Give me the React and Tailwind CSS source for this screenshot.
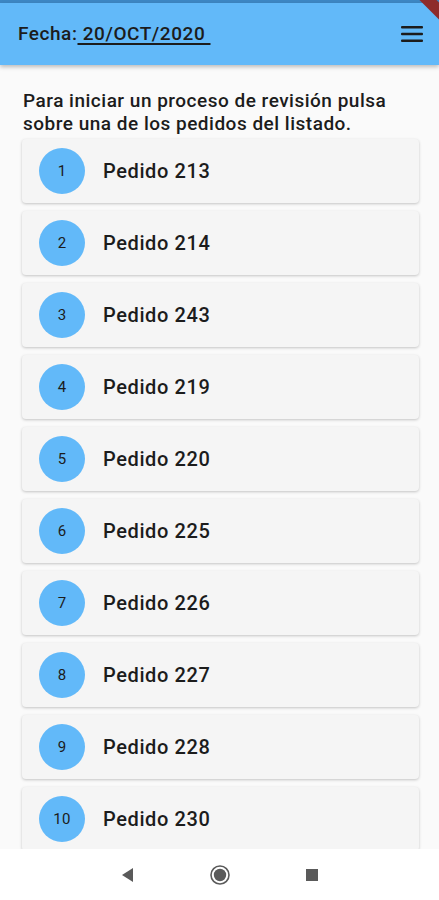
export default function App() {
  const pedidos = [213, 214, 243, 219, 220, 225, 226, 227, 228, 230];
  return (
    <div className="relative w-[439px] h-[900px] overflow-hidden bg-[#fafafa] flex flex-col" style={{ fontFamily: 'Roboto, "Liberation Sans", sans-serif' }}>
      <div className="h-[3px] bg-[#3d87c4] shrink-0" />
      <div className="h-[62px] shrink-0 bg-[#62b9f9] flex items-center justify-between pl-[18px] pr-[14px] shadow-[0_2px_4px_rgba(0,0,0,0.25)] z-10">
        <div className="text-[19px] font-medium text-[#1c1c1c] tracking-[0.55px]">
          Fecha:<span className="underline decoration-[1.5px] underline-offset-[3px] whitespace-pre"> 20/OCT/2020 </span>
        </div>
        <svg width="24" height="18" viewBox="0 0 24 18" className="mr-[1px]">
          <rect x="1" y="1" width="22" height="2.6" rx="1" fill="#1c1c1c" />
          <rect x="1" y="7.7" width="22" height="2.6" rx="1" fill="#1c1c1c" />
          <rect x="1" y="14.4" width="22" height="2.6" rx="1" fill="#1c1c1c" />
        </svg>
      </div>
      <div className="flex-1 flex flex-col px-[22px] pt-[24px]">
        <p className="text-[19px] font-medium leading-[23px] text-[#1c1c1c] pl-[1px] tracking-[0.5px]">
          Para iniciar un proceso de revisión pulsa sobre una de los pedidos del listado.
        </p>
        <div className="flex flex-col gap-[8px] mt-[4px] w-[397px]">
          {pedidos.map((p, i) => (
            <div key={p} className="h-[64px] shrink-0 bg-[#f5f5f5] rounded-[4px] shadow-[0_1px_3px_rgba(0,0,0,0.22)] flex items-center pl-[17px]">
              <div className="w-[46px] h-[46px] rounded-full bg-[#62b9f9] flex items-center justify-center text-[15px] text-[#1c1c1c] tracking-[0.3px]">
                {i + 1}
              </div>
              <span className="ml-[18px] text-[20px] font-medium text-[#1c1c1c] tracking-[0.6px]">Pedido {p}</span>
            </div>
          ))}
        </div>
      </div>
      <div className="absolute left-0 right-0 bottom-0 h-[51px] bg-white flex items-center justify-center">
        <div className="flex items-center gap-[70px]">
          <svg width="22" height="22" viewBox="0 0 22 22">
            <polygon points="16,4 16,18 5,11" fill="#5a5a5a" />
          </svg>
          <svg width="22" height="22" viewBox="0 0 22 22">
            <circle cx="11" cy="11" r="9" fill="none" stroke="#5a5a5a" strokeWidth="1.6" />
            <circle cx="11" cy="11" r="6.2" fill="#5a5a5a" />
          </svg>
          <svg width="22" height="22" viewBox="0 0 22 22">
            <rect x="5" y="5" width="12" height="12" fill="#5a5a5a" />
          </svg>
        </div>
      </div>
      <div className="absolute top-[0px] right-[-40px] w-[90px] h-[12px] bg-[#8e2b2b] rotate-45 z-20" />
    </div>
  );
}
